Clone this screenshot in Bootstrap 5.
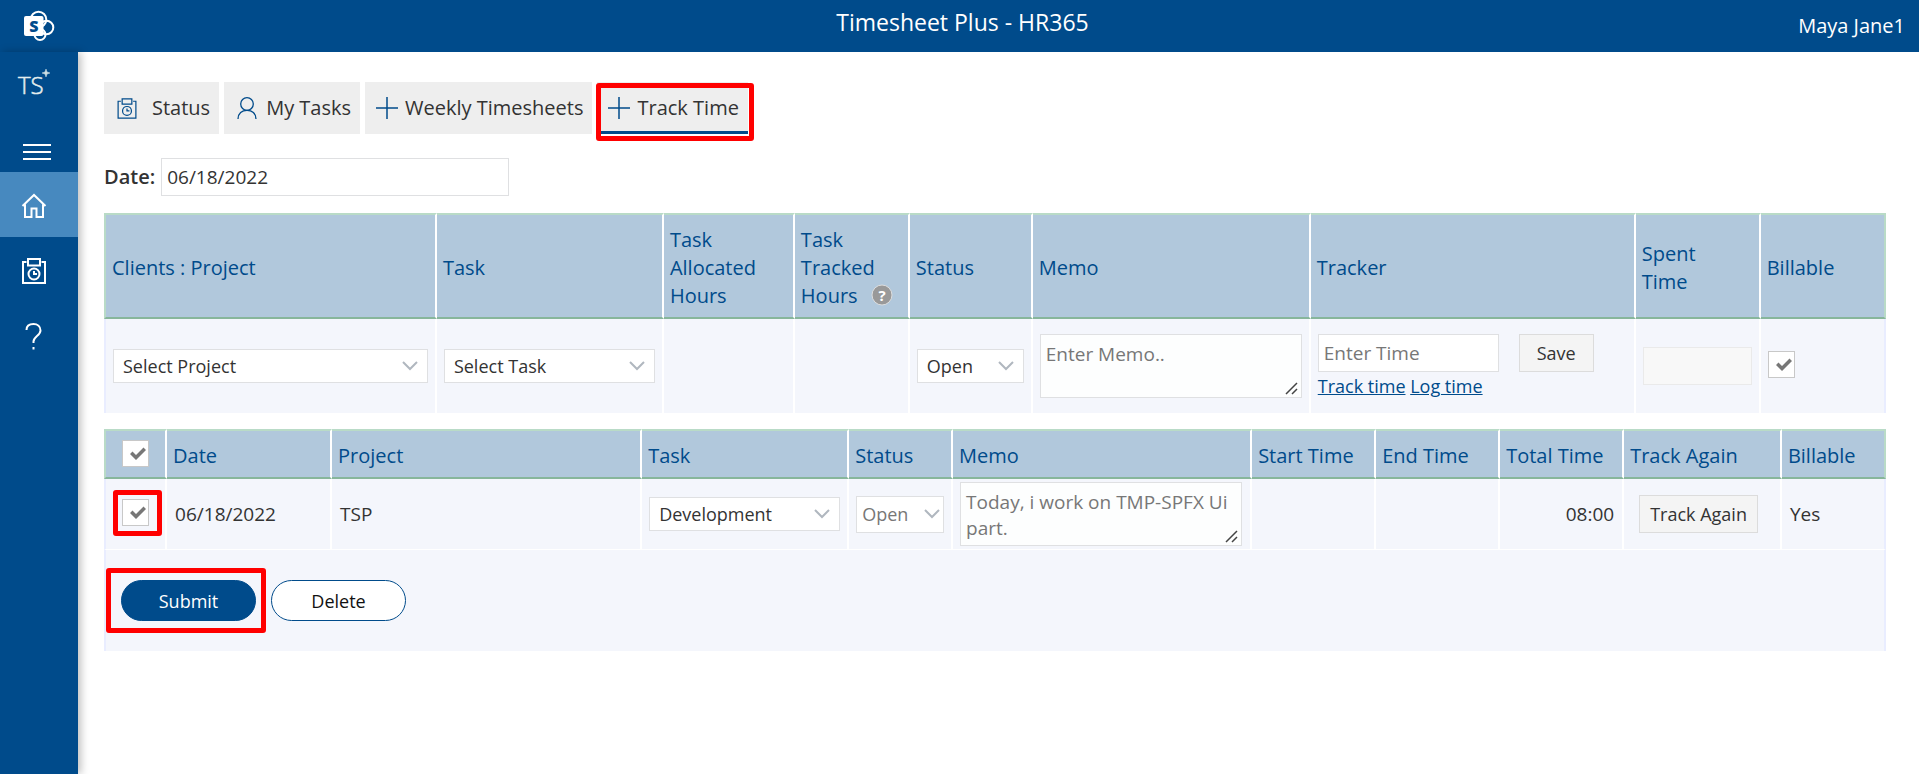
<!DOCTYPE html>
<html lang="en">
<head>
<meta charset="utf-8">
<meta name="viewport" content="width=device-width, initial-scale=1">
<title>Timesheet Plus - HR365</title>
<link href="https://cdn.jsdelivr.net/npm/bootstrap@5.3.0/dist/css/bootstrap.min.css" rel="stylesheet">
<style>
:root { --brand: #004b8b; }
body { font-family: "Open Sans", "Noto Sans", sans-serif; font-size: 20px; line-height: 28px; color: #333; background: #fff; }
.topbar { background: var(--brand); color: #fff; height: 52px; padding: 0 14px 0 20px; display: grid; grid-template-columns: 1fr auto 1fr; }
.topbar .app-title { font-size: 23px; line-height: 44px; margin: 0; font-weight: 400; }
.topbar .app-logo { margin-left: 4px; }
.side { background: var(--brand); width: 78px; flex: none; box-shadow: 3px 0 8px rgba(0,0,0,.25); min-height: calc(100vh - 52px); }
.side a, .side button { display: flex; align-items: center; height: 65px; padding: 2px 0 0 20px; border: 0; background: none; width: 100%; color: #fff; }
.side a.active { background: #4789bf; }
.side .brandmark { height: 64px; padding: 0 0 0 16px; }
.side .menu-btn { height: 56px; padding: 16px 0 0 23px; }
.workspace { padding: 30px 33px 30px 26px; min-width: 0; }
.tabs { gap: 5px; }
.tab-btn { background: #eee; border: 0; height: 52px; padding: 0 9px 0 11px; color: #333; display: flex; align-items: center; gap: 7px; position: relative; white-space: nowrap; }
.tab-btn.wide-gap { gap: 13px; }
.tab-btn svg { flex: none; }
.tab-btn.active { box-shadow: inset 0 -3px var(--brand); }
.callout { position: relative; }
.callout::after { content: ""; position: absolute; border: 5px solid #f00; border-radius: 3px; pointer-events: none; inset: -10px; }
.tab-btn.callout::after { inset: 1px -6px -7px -1px; }
.submit-wrap.callout::after { inset: -12px -10px -12px -15px; }
.callout.tick { width: 27px; }
.callout.tick::after { inset: -9px -13px -10px -9px; }
.box { border: 1px solid #dfe0e2; border-radius: 0; background-color: #fff; color: #333; font-size: 19px; line-height: 26px; padding: 3px 9px; width: 100%; display: block; }
.box::placeholder { color: #777; opacity: 1; }
input.box { height: 38px; padding: 3px 5px; }
input.box:disabled { background-color: #f8f8f8; border-color: #eaeaea; }
.date-row { gap: 6px; }
.date-field { width: 348px; }
select.box { height: 34px; font-size: 18px; appearance: none; background: #fff url("data:image/svg+xml,%3Csvg xmlns='http://www.w3.org/2000/svg' width='16' height='10'%3E%3Cpath d='M1 1l7 7 7-7' fill='none' stroke='%23b0b7bf' stroke-width='2'/%3E%3C/svg%3E") no-repeat right 9px center; }
select.box.tall { height: 37px; }
select.box.tight { padding: 3px 5px; background-position: right 3px center; }
select.box:disabled, textarea.box:disabled { color: #777; opacity: 1; }
textarea.box { height: 64px; resize: none; overflow: hidden; padding: 6px 5px; background: #fdfefe url("data:image/svg+xml,%3Csvg xmlns='http://www.w3.org/2000/svg' width='14' height='14'%3E%3Cpath d='M1 12L12 1M7 12l5-5' fill='none' stroke='%23444' stroke-width='1.5'/%3E%3C/svg%3E") no-repeat right 2px bottom 1px; line-height: 26px; }
.flat-btn { border: 1px solid #dcdcdc; background: #f4f4f4; color: #333; height: 38px; font-size: 18px; padding: 0 10px; white-space: nowrap; }
.save-btn { padding: 0 17px; }
.time-row { gap: 20px; }
.time-field { width: 181px !important; }
.grid-table { table-layout: fixed; width: 100%; border-collapse: separate; border-spacing: 0; border: 0; }
.grid-table th { background: #b1c8dc; color: var(--brand); font-weight: 400; padding: 3px 6px 0; border-top: 2px solid #b9dbc7; border-bottom: 2px solid #87b69b; border-right: 2px solid #fff; vertical-align: middle; }
.grid-table th:first-child { border-left: 2px solid #b9dbc7; }
.grid-table th:last-child { border-right-color: #b9dbc7; }
.grid-table td { background: #f4f6fc; padding: 0 8px; border-right: 2px solid #fff; vertical-align: middle; font-size: 19px; }
.grid-table td:first-child { border-left: 2px solid #e9edff; }
.grid-table td:last-child { border-right-color: #e9edff; }
.grid-table .help-dot { vertical-align: -3px; }
.entry { margin-top: 17px; }
.entry th { height: 106px; }
.entry td { height: 94px; padding: 0 7px; }
.entry td:nth-child(7) { padding-top: 2px; }
.entry td:last-child { padding-bottom: 4px; }
.log { margin-top: 16px; }
.log th { height: 50px; }
.log th:first-child { padding: 0 0 2px 16px; }
.log tbody td { height: 71px; border-bottom: 1px solid #fff; }
.log tbody td:first-child { padding: 0 0 4px 16px; }
.log tfoot td { height: 101px; padding: 0 15px; }
.log td:nth-child(4), .log td:nth-child(5) { padding: 0 7px; }
.log td:nth-child(6) { padding: 0 8px 0 7px; }
.log td:nth-child(10) { padding: 0 15px; }
.check-box { appearance: none; display: block; width: 27px; height: 27px; border: 1px solid #c8c8c8; margin: 0; background: #fff; }
.check-box:checked { background: #fff url("data:image/svg+xml,%3Csvg xmlns='http://www.w3.org/2000/svg' width='16' height='14'%3E%3Cpath d='M0 7l2.500-2.500L6 8l7.500-7.500L16 3l-10 10z' fill='%23777'/%3E%3C/svg%3E") no-repeat 7px 6px; }
.pill { width: 135px; height: 41px; border-radius: 21px; border: 1px solid var(--brand); background: #fff; color: #111; font-size: 18px; }
.pill.filled { background: var(--brand); color: #fff; }
.pill-row { gap: 15px; }
.text-link { color: var(--brand); line-height: 26px; }
.link-row { font-size: 18px; line-height: 28px; }
/* entry table columns */
.e1{width:18.68%}.e2{width:12.74%}.e3{width:7.35%}.e4{width:6.45%}.e5{width:6.9%}.e6{width:15.6%}.e7{width:18.24%}.e8{width:7.01%}.e9{width:7.03%}
/* log table columns */
.l1{width:3.54%}.l2{width:9.26%}.l3{width:17.4%}.l4{width:11.62%}.l5{width:5.83%}.l6{width:16.78%}.l7,.l8,.l9{width:6.96%}.l10{width:8.85%}.l11{width:5.84%}
</style>
</head>
<body>
<svg width="0" height="0" class="position-absolute" aria-hidden="true">
  <symbol id="punch" viewBox="0 0 24 26"><g fill="none" stroke="currentColor"><path d="M4.500 4H1v21h22V4h-3.500M6 1h12v6.500H6z"/><circle cx="12" cy="16" r="5.500"/><path d="M12 13v3h3"/></g></symbol>
  <symbol id="plus" viewBox="0 0 22 22"><path d="M11 0v22M0 11h22" fill="none" stroke="currentColor" stroke-width="1.500"/></symbol>
</svg>
<header class="topbar">
  <svg width="32" height="32" viewBox="0 0 32 32" class="app-logo align-self-center" role="img" aria-label="SharePoint"><g fill="none" stroke="#fff" stroke-width="2"><circle cx="14.500" cy="9.500" r="7.800"/><circle cx="22.500" cy="17.500" r="6.800"/><circle cx="16" cy="24.500" r="5.500"/></g><rect x="0" y="6" width="19.500" height="20" rx="2" fill="#fff"/><text x="9.800" y="21.500" text-anchor="middle" font-size="16" font-weight="800" fill="#004b8b">S</text></svg>
  <h1 class="app-title">Timesheet Plus - HR365</h1>
  <span class="text-end align-self-center user-name">Maya Jane1</span>
</header>
<div class="d-flex">
  <nav class="side" aria-label="Main">
    <a href="#" class="brandmark text-decoration-none" aria-label="Timesheet Plus"><svg width="36" height="34" viewBox="0 0 36 34"><text x="2" y="27" font-size="24" font-family="Open Sans" font-weight="300" fill="#e4eeee" stroke="#e4eeee" stroke-width=".5">TS</text><path d="M30 2l1 3 3 1-3 1-1 3-1-3-3-1 3-1z" fill="#cfe0e4" stroke="#cfe0e4" stroke-width=".5"/></svg></a>
    <button type="button" class="menu-btn" aria-label="Menu"><svg width="28" height="16" viewBox="0 0 28 16"><path d="M0 1h28M0 8h28M0 15h28" stroke="#fff" stroke-width="2"/></svg></button>
    <a href="#" class="active" aria-label="Home"><svg width="28" height="26" viewBox="0 0 28 26" fill="none" stroke="#fff" stroke-width="2"><path d="M2.500 13L14 2l11.500 11M5 11.500V24h6.500v-8.500h5V24H23V11.500"/></svg></a>
    <a href="#" aria-label="Status"><svg width="28" height="26" stroke-width="2"><use href="#punch" x="2" width="24" height="26"/></svg></a>
    <a href="#" aria-label="Help"><svg width="28" height="28" viewBox="0 0 28 28" fill="none" stroke="#fff" stroke-width="2"><path d="M6.500 8C6.500 4 9.500 2 13.500 2s7 2.500 7 6.500c0 5-7 6-7 11V21M13.500 25v2.500"/></svg></a>
  </nav>
  <main class="workspace flex-grow-1">
    <div class="d-flex tabs">
      <button type="button" class="tab-btn wide-gap"><svg width="24" height="21" color="#004b8b" stroke-width="1.500"><use href="#punch" x="0" width="24" height="21"/></svg>Status</button>
      <button type="button" class="tab-btn"><svg width="24" height="22" viewBox="0 0 24 22" fill="none" stroke="#004b8b" stroke-width="1.300"><circle cx="12" cy="7" r="6.300"/><path d="M3 22c0-5.500 4-8.700 9-8.700s9 3.200 9 8.700"/></svg>My Tasks</button>
      <button type="button" class="tab-btn"><svg width="22" height="22" color="#004b8b"><use href="#plus"/></svg>Weekly Timesheets</button>
      <button type="button" class="tab-btn active callout"><svg width="22" height="22" color="#004b8b"><use href="#plus"/></svg>Track Time</button>
    </div>
    <div class="d-flex align-items-center mt-4 date-row">
      <label for="day" class="fw-semibold">Date:</label>
      <input id="day" class="box date-field" type="text" value="06/18/2022">
    </div>
    <table class="grid-table entry">
      <colgroup><col class="e1"><col class="e2"><col class="e3"><col class="e4"><col class="e5"><col class="e6"><col class="e7"><col class="e8"><col class="e9"></colgroup>
      <thead><tr>
        <th>Clients : Project</th><th>Task</th><th>Task Allocated Hours</th>
        <th>Task Tracked Hours <svg width="22" height="22" viewBox="0 0 22 22" class="ms-2 help-dot" role="img" aria-label="Help"><circle cx="11" cy="11" r="10" fill="#999" stroke="#ddd"/><text x="11" y="16.500" text-anchor="middle" font-size="15" font-weight="700" fill="#fff">?</text></svg></th>
        <th>Status</th><th>Memo</th><th>Tracker</th><th>Spent<br>Time</th><th>Billable</th>
      </tr></thead>
      <tbody><tr>
        <td><select class="box" aria-label="Project"><option>Select Project</option></select></td>
        <td><select class="box" aria-label="Task"><option>Select Task</option></select></td>
        <td></td><td></td>
        <td><select class="box" aria-label="Status"><option>Open</option></select></td>
        <td><textarea class="box" placeholder="Enter Memo.." aria-label="Memo"></textarea></td>
        <td><div class="d-flex time-row"><input class="box time-field" type="text" placeholder="Enter Time" aria-label="Time"><button type="button" class="flat-btn save-btn">Save</button></div><div class="link-row"><a href="#" class="text-link">Track time</a> <a href="#" class="text-link">Log time</a></div></td>
        <td><input class="box" type="text" disabled aria-label="Spent time"></td>
        <td><input class="check-box" type="checkbox" checked aria-label="Billable"></td>
      </tr></tbody>
    </table>
    <table class="grid-table log">
      <colgroup><col class="l1"><col class="l2"><col class="l3"><col class="l4"><col class="l5"><col class="l6"><col class="l7"><col class="l8"><col class="l9"><col class="l10"><col class="l11"></colgroup>
      <thead><tr>
        <th><input class="check-box" type="checkbox" checked aria-label="Select all"></th>
        <th>Date</th><th>Project</th><th>Task</th><th>Status</th><th>Memo</th><th>Start Time</th><th>End Time</th><th>Total Time</th><th>Track Again</th><th>Billable</th>
      </tr></thead>
      <tbody><tr>
        <td><label class="callout tick d-block"><input class="check-box" type="checkbox" checked aria-label="Select entry"></label></td>
        <td>06/18/2022</td><td>TSP</td>
        <td><select class="box" aria-label="Entry task"><option>Development</option></select></td>
        <td><select class="box tall tight" disabled aria-label="Entry status"><option>Open</option></select></td>
        <td><textarea class="box" disabled aria-label="Entry memo">Today, i work on TMP-SPFX Ui part.</textarea></td>
        <td></td><td></td><td class="text-end">08:00</td>
        <td><button type="button" class="flat-btn">Track Again</button></td><td>Yes</td>
      </tr></tbody>
      <tfoot><tr><td colspan="11"><div class="d-flex pill-row"><span class="submit-wrap callout"><button type="button" class="pill filled">Submit</button></span><button type="button" class="pill">Delete</button></div></td></tr></tfoot>
    </table>
  </main>
</div>
<script src="https://cdn.jsdelivr.net/npm/bootstrap@5.3.0/dist/js/bootstrap.bundle.min.js"></script>
</body>
</html>
